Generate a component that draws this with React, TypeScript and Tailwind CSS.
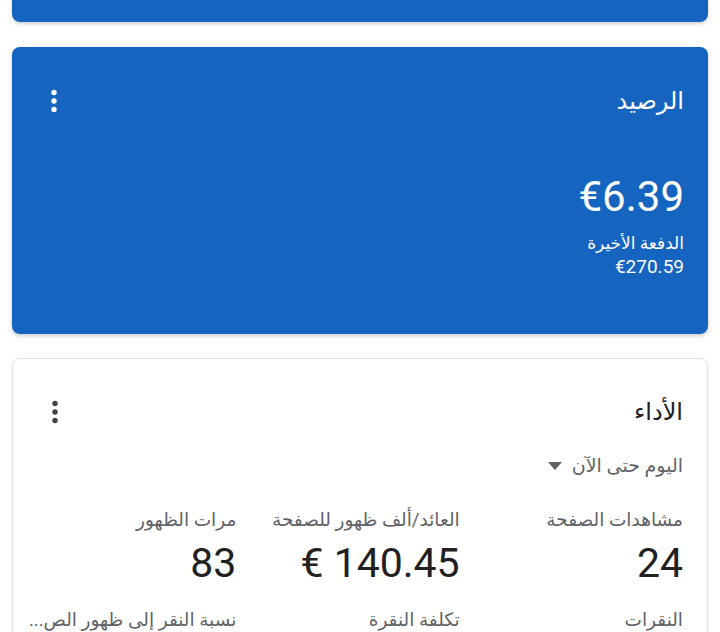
import React from "react";

function Dots({ color }: { color: string }) {
  return (
    <svg width="12" height="26" viewBox="0 0 12 26" fill={color} aria-hidden>
      <circle cx="6" cy="4.5" r="2.7" />
      <circle cx="6" cy="13" r="2.7" />
      <circle cx="6" cy="21.5" r="2.7" />
    </svg>
  );
}

const metrics = [
  { label: "مشاهدات الصفحة", value: "24" },
  { label: "العائد/ألف ظهور للصفحة", value: "€ 140.45" },
  { label: "مرات الظهور", value: "83" },
  { label: "النقرات", value: "" },
  { label: "تكلفة النقرة", value: "" },
  { label: "نسبة النقر إلى ظهور الص...", value: "" },
];

export default function App() {
  return (
    <div
      dir="rtl"
      className="w-[720px] h-[632px] overflow-hidden bg-white px-3"
      style={{ fontFamily: "Roboto, 'Noto Sans', 'DejaVu Sans', sans-serif" }}
    >
      {/* scrolled-off card */}
      <div className="h-[22px] rounded-b-lg bg-[#1565c0] shadow-[0_2px_4px_rgba(0,0,0,0.18)]" />

      {/* balance card */}
      <div className="mt-[25px] h-[287px] rounded-lg bg-[#1565c0] px-6 pt-[30px] text-white shadow-[0_2px_4px_rgba(0,0,0,0.2)]">
        <div className="flex h-12 items-center justify-between">
          <div className="text-[24px]">الرصيد</div>
          <div className="ml-3">
            <Dots color="#ffffff" />
          </div>
        </div>
        <div dir="ltr" className="mt-[50px] text-right text-[42px] leading-[44px]">
          €6.39
        </div>
        <div className="mt-3 text-[17px] leading-6">الدفعة الأخيرة</div>
        <div dir="ltr" className="text-right text-[19px] leading-6">
          €270.59
        </div>
      </div>

      {/* performance card */}
      <div className="mt-6 h-[300px] rounded-lg border border-[#e2e2e2] bg-white px-6 pt-[29px] shadow-[0_1px_3px_rgba(0,0,0,0.08)]">
        <div className="flex h-12 items-center justify-between">
          <div className="text-[24px] text-[#212121]">الأداء</div>
          <div className="ml-3">
            <Dots color="#424242" />
          </div>
        </div>
        <div className="mt-[18px] flex items-center gap-[10px] text-[19px] leading-6 text-[#5f6368]">
          <span>اليوم حتى الآن</span>
          <svg width="14" height="8" viewBox="0 0 14 8" aria-hidden>
            <polygon points="0,0 14,0 7,8" fill="#616161" />
          </svg>
        </div>
        <div className="mt-[30px] grid grid-cols-3 gap-x-6 gap-y-[21px]">
          {metrics.map((m, i) => (
            <div key={i} className="min-w-0">
              <div className="whitespace-nowrap text-[18.5px] leading-6 text-[#5f6368]">
                {m.label}
              </div>
              {m.value && (
                <div dir="ltr" className="mt-[7px] text-right text-[41px] leading-[48px] text-[#212121]">
                  {m.value}
                </div>
              )}
            </div>
          ))}
        </div>
      </div>
    </div>
  );
}
